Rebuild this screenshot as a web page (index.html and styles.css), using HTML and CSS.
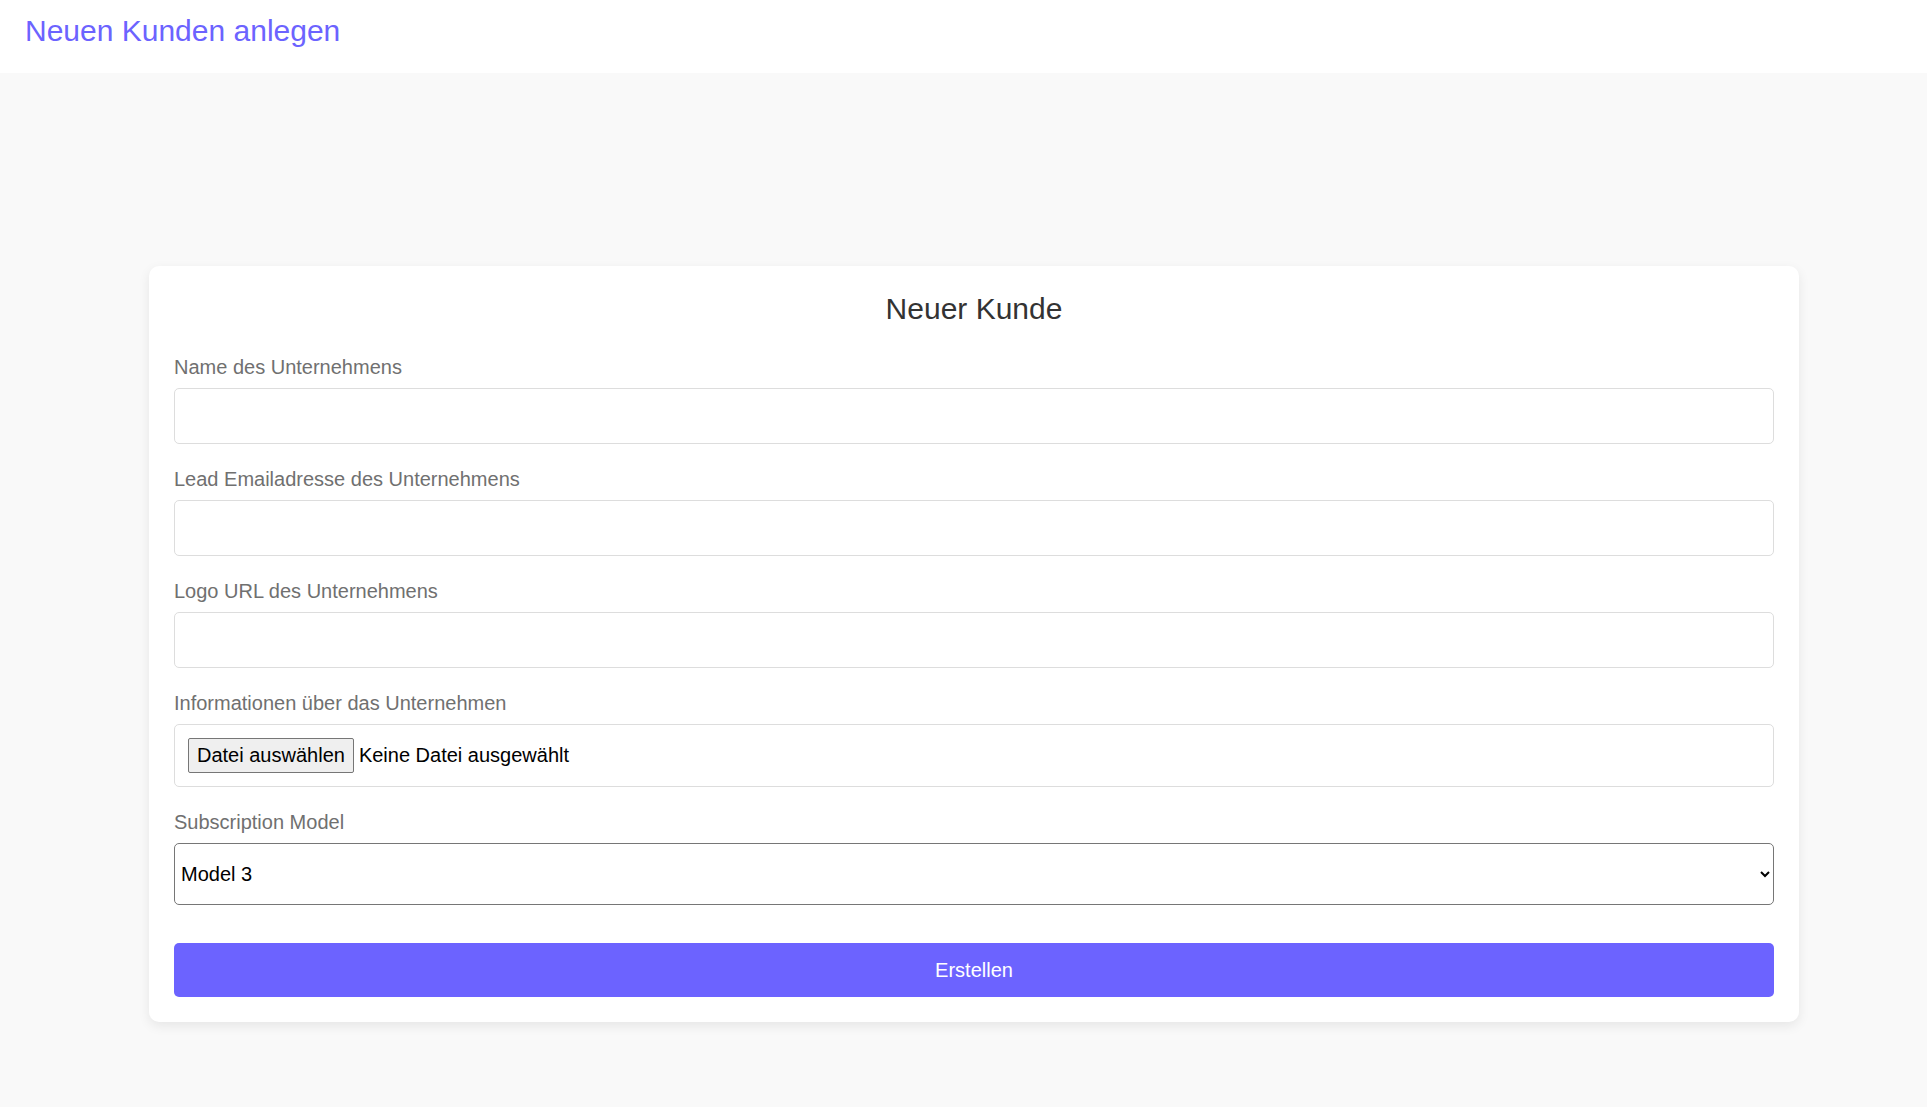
FILE: index.html
```html
<!DOCTYPE html>
<html lang="de">
<head>
<meta charset="utf-8">
<title>Neuen Kunden anlegen</title>
<link rel="stylesheet" href="styles.css">
</head>
<body>
<header class="topbar">
  <h1 class="topbar-title">Neuen Kunden anlegen</h1>
</header>
<main class="page">
  <form class="card">
    <h2 class="card-title">Neuer Kunde</h2>
    <div class="field">
      <label class="field-label" for="name">Name des Unternehmens</label>
      <input class="text-input" id="name" type="text">
    </div>
    <div class="field">
      <label class="field-label" for="email">Lead Emailadresse des Unternehmens</label>
      <input class="text-input" id="email" type="email">
    </div>
    <div class="field">
      <label class="field-label" for="logo">Logo URL des Unternehmens</label>
      <input class="text-input" id="logo" type="text">
    </div>
    <div class="field">
      <span class="field-label">Informationen über das Unternehmen</span>
      <div class="file-box">
        <label class="file-btn" for="info">Datei auswählen</label>
        <span class="file-name">Keine Datei ausgewählt</span>
        <input class="file-hidden" id="info" type="file">
      </div>
    </div>
    <div class="field">
      <label class="field-label" for="model">Subscription Model</label>
      <select class="select-input" id="model">
        <option>Model 1</option>
        <option>Model 2</option>
        <option selected>Model 3</option>
      </select>
    </div>
    <button class="submit-btn" type="button">Erstellen</button>
  </form>
</main>
</body>
</html>
```

FILE: styles.css
```css
* {
  box-sizing: border-box;
}

html, body {
  margin: 0;
  padding: 0;
}

body {
  font-family: "Liberation Sans", Arial, sans-serif;
  background: #f9f9f9;
  min-height: 1107px;
}

.topbar {
  background: #ffffff;
  height: 73px;
  padding: 14px 25px 0;
}

.topbar-title {
  margin: 0;
  font-size: 30px;
  line-height: 34px;
  font-weight: normal;
  color: #6c63ff;
}

.page {
  padding: 193px 128px 0 149px;
}

.card {
  width: 1650px;
  background: #ffffff;
  border-radius: 10px;
  box-shadow: 0 4px 12px rgba(0, 0, 0, 0.08);
  padding: 25px;
  display: flex;
  flex-direction: column;
}

.card-title {
  margin: 1px 0 28px;
  font-size: 30px;
  line-height: 34px;
  font-weight: normal;
  color: #333333;
  text-align: center;
}

.field {
  display: flex;
  flex-direction: column;
  margin-bottom: 22px;
}

.field:last-of-type {
  margin-bottom: 0;
}

.field-label {
  font-size: 20px;
  line-height: 24px;
  color: #707070;
  padding-top: 1px;
  margin-bottom: 9px;
}

.text-input {
  height: 56px;
  border: 1px solid #dddddd;
  border-radius: 5px;
  background: #ffffff;
  font-family: inherit;
  font-size: 20px;
  padding: 0 14px;
}

.file-box {
  display: flex;
  align-items: center;
  border: 1px solid #dddddd;
  border-radius: 5px;
  background: #ffffff;
  padding: 13px;
  font-size: 20px;
  line-height: 23px;
  color: #000000;
}

.file-btn {
  padding: 5px 8px;
  margin-right: 5px;
  border: 1px solid #767676;
  border-radius: 2px;
  background: #efefef;
  color: #000000;
}

.file-hidden {
  display: none;
}

.select-input {
  height: 62px;
  border: 1px solid #767676;
  border-radius: 5px;
  background: #ffffff;
  font-family: inherit;
  font-size: 20px;
  color: #000000;
  padding: 0 2px;
}

.submit-btn {
  margin-top: 38px;
  height: 54px;
  border: none;
  border-radius: 5px;
  background: #6c63ff;
  color: #ffffff;
  font-family: inherit;
  font-size: 20px;
}
```
